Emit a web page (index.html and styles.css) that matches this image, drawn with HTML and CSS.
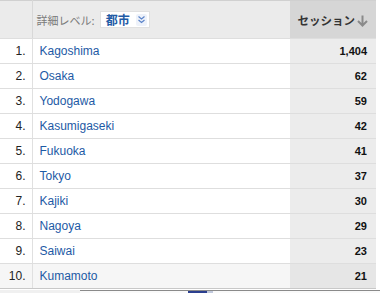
FILE: index.html
```html
<!DOCTYPE html>
<html lang="ja">
<head>
<meta charset="utf-8">
<link rel="stylesheet" href="styles.css">
</head>
<body>
<div class="wrap">
<table class="report">
  <colgroup><col class="c-num"><col class="c-name"><col class="c-val"></colgroup>
  <thead>
    <tr>
      <th class="h-num"></th>
      <th class="h-name">
        <span class="lvl">詳細レベル:</span>
        <span class="sel"><span class="sel-text">都市</span><span class="sel-btn"><svg width="9" height="9" viewBox="0 0 9 9"><path d="M1.5 1.5 L4.5 4 L7.5 1.5 M1.5 5 L4.5 7.5 L7.5 5" fill="none" stroke="#5b84c9" stroke-width="1.2"/></svg></span></span>
      </th>
      <th class="h-val">セッション<svg class="arrow" width="11" height="12" viewBox="0 0 11 12"><path d="M5.5 0.5 V10 M1 6 L5.5 10.5 L10 6" fill="none" stroke="#8a8a8a" stroke-width="2"/></svg></th>
    </tr>
  </thead>
  <tbody>
    <tr><td class="num">1.</td><td class="name"><a>Kagoshima</a></td><td class="val">1,404</td></tr>
    <tr><td class="num">2.</td><td class="name"><a>Osaka</a></td><td class="val">62</td></tr>
    <tr><td class="num">3.</td><td class="name"><a>Yodogawa</a></td><td class="val">59</td></tr>
    <tr><td class="num">4.</td><td class="name"><a>Kasumigaseki</a></td><td class="val">42</td></tr>
    <tr><td class="num">5.</td><td class="name"><a>Fukuoka</a></td><td class="val">41</td></tr>
    <tr><td class="num">6.</td><td class="name"><a>Tokyo</a></td><td class="val">37</td></tr>
    <tr><td class="num">7.</td><td class="name"><a>Kajiki</a></td><td class="val">30</td></tr>
    <tr><td class="num">8.</td><td class="name"><a>Nagoya</a></td><td class="val">29</td></tr>
    <tr><td class="num">9.</td><td class="name"><a>Saiwai</a></td><td class="val">23</td></tr>
    <tr class="hover"><td class="num">10.</td><td class="name"><a>Kumamoto</a></td><td class="val">21</td></tr>
  </tbody>
</table>
<div class="footer">
  <div class="f-left"></div>
  <div class="f-track"><div class="f-gap"></div><div class="f-thumb"></div><div class="f-thumb2"></div></div>
</div>
</div>
</body>
</html>
```
FILE: styles.css
```css
html, body { margin: 0; padding: 0; background: #fff; }
body { font-family: "Liberation Sans", Arial, "Noto Sans CJK JP", sans-serif; font-size: 12px; color: #333; width: 380px; height: 293px; overflow: hidden; }
.wrap { width: 376px; }
.report { width: 376px; border-collapse: collapse; table-layout: fixed; }
.c-num { width: 32px; }
.c-name { width: 258px; }
.c-val { width: 86px; }
.report th, .report td { padding: 0; border-bottom: 1px solid #dedede; }
thead tr { height: 38px; }
thead th { background: #ebebeb; border-top: 1px solid #d0d0d0; border-bottom: 1px solid #d4d4d4; font-weight: normal; vertical-align: middle; }
.h-num { border-right: 1px solid #d8d8d8; }
.h-name { text-align: left; padding-left: 4px !important; font-size: 11px; color: #777; white-space: nowrap; }
.lvl { font-family: "Noto Sans CJK JP", sans-serif; font-size: 11px; color: #7a7a7a; vertical-align: middle; }
.sel { display: inline-flex; align-items: center; height: 17px; background: #fff; border: 1px solid #e0e0e0; margin-left: 2px; vertical-align: middle; box-sizing: border-box; }
.sel-text { font-family: "Noto Sans CJK JP", sans-serif; font-weight: bold; color: #1f5ba6; font-size: 12px; padding: 0 6px 0 5px; line-height: 15px; }
.sel-btn { display: flex; align-items: center; justify-content: center; width: 11px; height: 12px; background: #eef2fa; border-radius: 2px; margin-right: 2px; }
.h-val { background: #d6d6d6 !important; text-align: right; padding-right: 8px !important; font-family: "Noto Sans CJK JP", sans-serif; font-weight: bold; font-size: 11.5px; color: #333; white-space: nowrap; }
.arrow { vertical-align: -2px; margin-left: 2px; }
tbody tr { height: 25px; }
tbody td { vertical-align: middle; background: #fff; }
td.num { text-align: right; padding-right: 6px; border-right: 1px solid #e0e0e0; color: #222; }
td.name { padding-left: 7px; }
td.name a { color: #1d5aa5; text-decoration: none; }
td.val { background: #ececec; text-align: right; padding-right: 9px; font-weight: bold; font-size: 11px; color: #111; }
tr.hover td.num, tr.hover td.name { background: #f6f6f6; }
tr.hover td.val { background: #e6e6e6; }
tbody tr:last-child td { border-bottom: 1px solid #c8c8c8; }
.footer { display: flex; height: 5px; margin-top: 1px; width: 380px; }
.f-left { width: 80px; background: #f0f0f0; }
.f-track { flex: 1; display: flex; border-top: 1px solid #8a8a8a; background: #fafafa; }
.f-gap { width: 108px; }
.f-thumb { width: 19px; background: #2b3f8f; }
.f-thumb2 { width: 6px; background: #c0c8dc; }
```
